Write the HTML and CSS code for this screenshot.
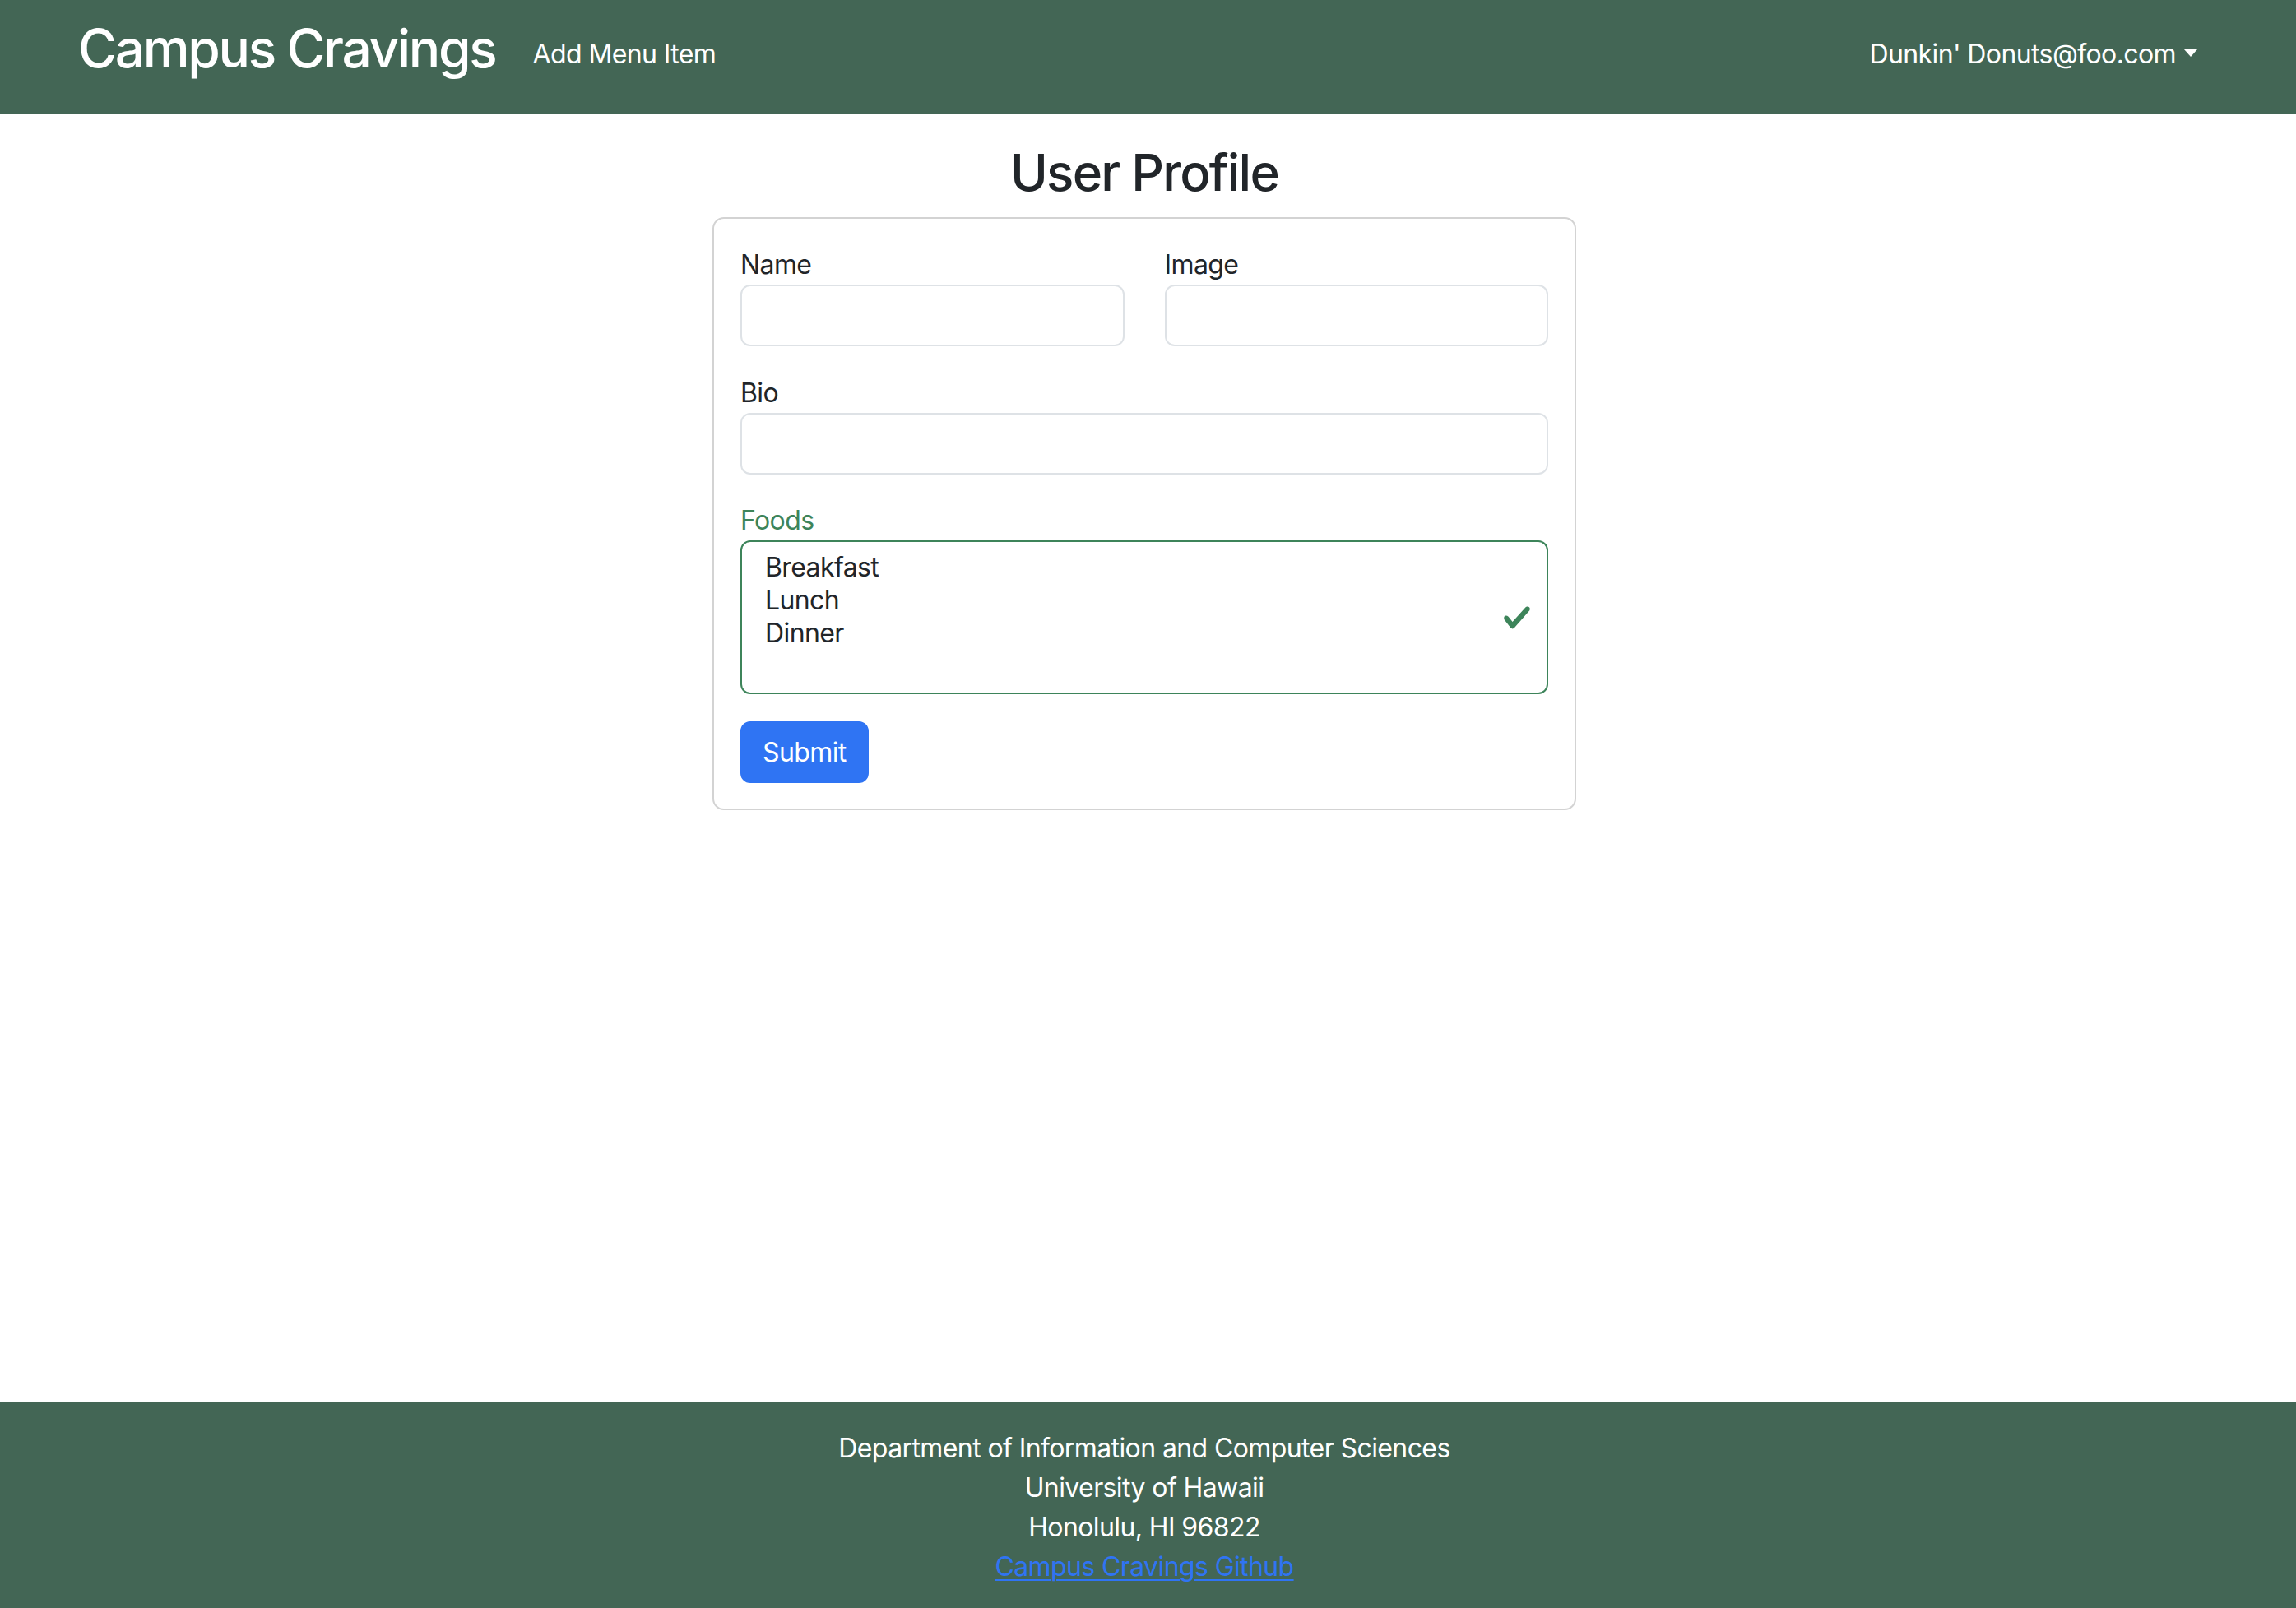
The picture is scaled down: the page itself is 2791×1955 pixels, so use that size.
FILE: index.html
```html
<!DOCTYPE html>
<html lang="en">
<head>
<meta charset="utf-8">
<title>Campus Cravings</title>
<link rel="stylesheet" href="styles.css">
</head>
<body>
<nav class="navbar">
  <a class="brand" href="#">Campus Cravings</a>
  <a class="nav-link" href="#">Add Menu Item</a>
  <div class="user-menu">
    <a class="nav-link dropdown-toggle" href="#">Dunkin' Donuts@foo.com</a>
  </div>
</nav>

<main class="main">
  <h2 class="title">User Profile</h2>
  <div class="card">
    <form class="card-body">
      <div class="row">
        <div class="field">
          <label class="form-label">Name</label>
          <input class="form-control" type="text">
        </div>
        <div class="field">
          <label class="form-label">Image</label>
          <input class="form-control" type="text">
        </div>
      </div>
      <div class="field">
        <label class="form-label">Bio</label>
        <input class="form-control" type="text">
      </div>
      <div class="field field-foods">
        <label class="form-label valid">Foods</label>
        <div class="form-select is-valid" role="listbox" aria-multiselectable="true">
          <div class="option" role="option">Breakfast</div>
          <div class="option" role="option">Lunch</div>
          <div class="option" role="option">Dinner</div>
          <svg class="valid-icon" viewBox="0 0 8 8" aria-hidden="true"><path fill="#3d845a" d="M2.3 6.73.6 4.53c-.4-1.04.46-1.4 1.1-.8l1.1 1.4 3.4-3.8c.6-.63 1.6-.27 1.2.7l-4 4.6c-.43.5-.8.4-1.1.1z"/></svg>
        </div>
      </div>
      <button class="btn-primary" type="button">Submit</button>
    </form>
  </div>
</main>

<footer class="footer">
  <div class="footer-inner">
    Department of Information and Computer Sciences<br>
    University of Hawaii<br>
    Honolulu, HI 96822<br>
    <a class="footer-link" href="#">Campus Cravings Github</a>
  </div>
</footer>
</body>
</html>
```

FILE: styles.css
```css
* { box-sizing: border-box; }

html, body {
  margin: 0;
  padding: 0;
}

body {
  font-family: Inter, "Liberation Sans", sans-serif;
  font-size: 32px;
  line-height: 48px;
  letter-spacing: -0.6px;
  color: #212529;
  background: #fff;
  min-height: 100vh;
  display: flex;
  flex-direction: column;
}

/* Navbar */
.navbar {
  height: 138px;
  background: #436655;
  display: flex;
  align-items: flex-start;
  padding: 0 120px 0 95px;
}

.brand {
  color: #fff;
  text-decoration: none;
  font-size: 64px;
  line-height: 64px;
  font-weight: 500;
  margin-top: 27px;
  margin-right: 29px;
  letter-spacing: -2.3px;
}

.nav-link {
  color: #fff;
  text-decoration: none;
  font-size: 32px;
  line-height: 48px;
  margin-top: 42px;
  padding: 0 16px;
}

.user-menu {
  margin-left: auto;
  display: flex;
}

.dropdown-toggle {
  padding-right: 0;
  display: flex;
  align-items: center;
}

.dropdown-toggle::after {
  content: "";
  display: inline-block;
  margin-left: 10px;
  border-top: 9px solid #fff;
  border-left: 8px solid transparent;
  border-right: 8px solid transparent;
  border-bottom: 0;
  margin-top: -4px;
}

/* Main */
.main {
  display: flex;
  flex-direction: column;
  align-items: center;
  padding-right: 9px;
}

.title {
  margin: 33px 0 16px;
  font-size: 62px;
  line-height: 77px;
  font-weight: 500;
  letter-spacing: -1.8px;
}

.card {
  width: 1050px;
  border: 2px solid #d3d3d3;
  border-radius: 14px;
  background: #fff;
}

.card-body {
  padding: 32px 32px 31px;
  display: flex;
  flex-direction: column;
  align-items: stretch;
}

.row {
  display: grid;
  grid-template-columns: 1fr 1fr;
  column-gap: 49px;
}

.field {
  display: flex;
  flex-direction: column;
  margin-bottom: 33px;
}

.field-foods {
  margin-bottom: 33px;
}

.row + .field {
  margin-bottom: 32px;
}

.form-label {
  display: block;
  height: 48px;
  line-height: 48px;
  font-size: 32px;
}

.form-label.valid {
  color: #3d845a;
}

.form-control {
  display: block;
  width: 100%;
  height: 75px;
  border: 2px solid #dee2e6;
  border-radius: 12px;
  background: #fff;
  font-family: inherit;
  font-size: 32px;
  padding: 12px 24px;
  margin: 0;
  outline: none;
}

.form-select {
  position: relative;
  height: 187px;
  border: 2px solid #3d845a;
  border-radius: 12px;
  padding: 11px 80px 11px 28px;
}

.option {
  font-size: 32px;
  line-height: 40px;
  height: 40px;
  color: #212529;
}

.valid-icon {
  position: absolute;
  width: 36px;
  height: 36px;
  right: 18px;
  top: 50%;
  margin-top: -18px;
}

.btn-primary {
  align-self: flex-start;
  height: 75px;
  padding: 0 25px;
  border: 2px solid #2f74f3;
  border-radius: 12px;
  background: #2f74f3;
  color: #fff;
  font-family: inherit;
  font-size: 32px;
  line-height: 48px;
  letter-spacing: -0.6px;
  cursor: pointer;
}

/* Footer */
.footer {
  margin-top: auto;
  height: 250px;
  background: #436655;
  color: #fff;
  text-align: center;
  padding-top: 32px;
}

.footer-inner {
  padding-right: 9px;
  font-size: 32px;
  line-height: 48px;
}

.footer-link {
  color: #2f74f3;
  text-decoration: underline;
  text-decoration-thickness: 2px;
  text-underline-offset: 4px;
}
```
